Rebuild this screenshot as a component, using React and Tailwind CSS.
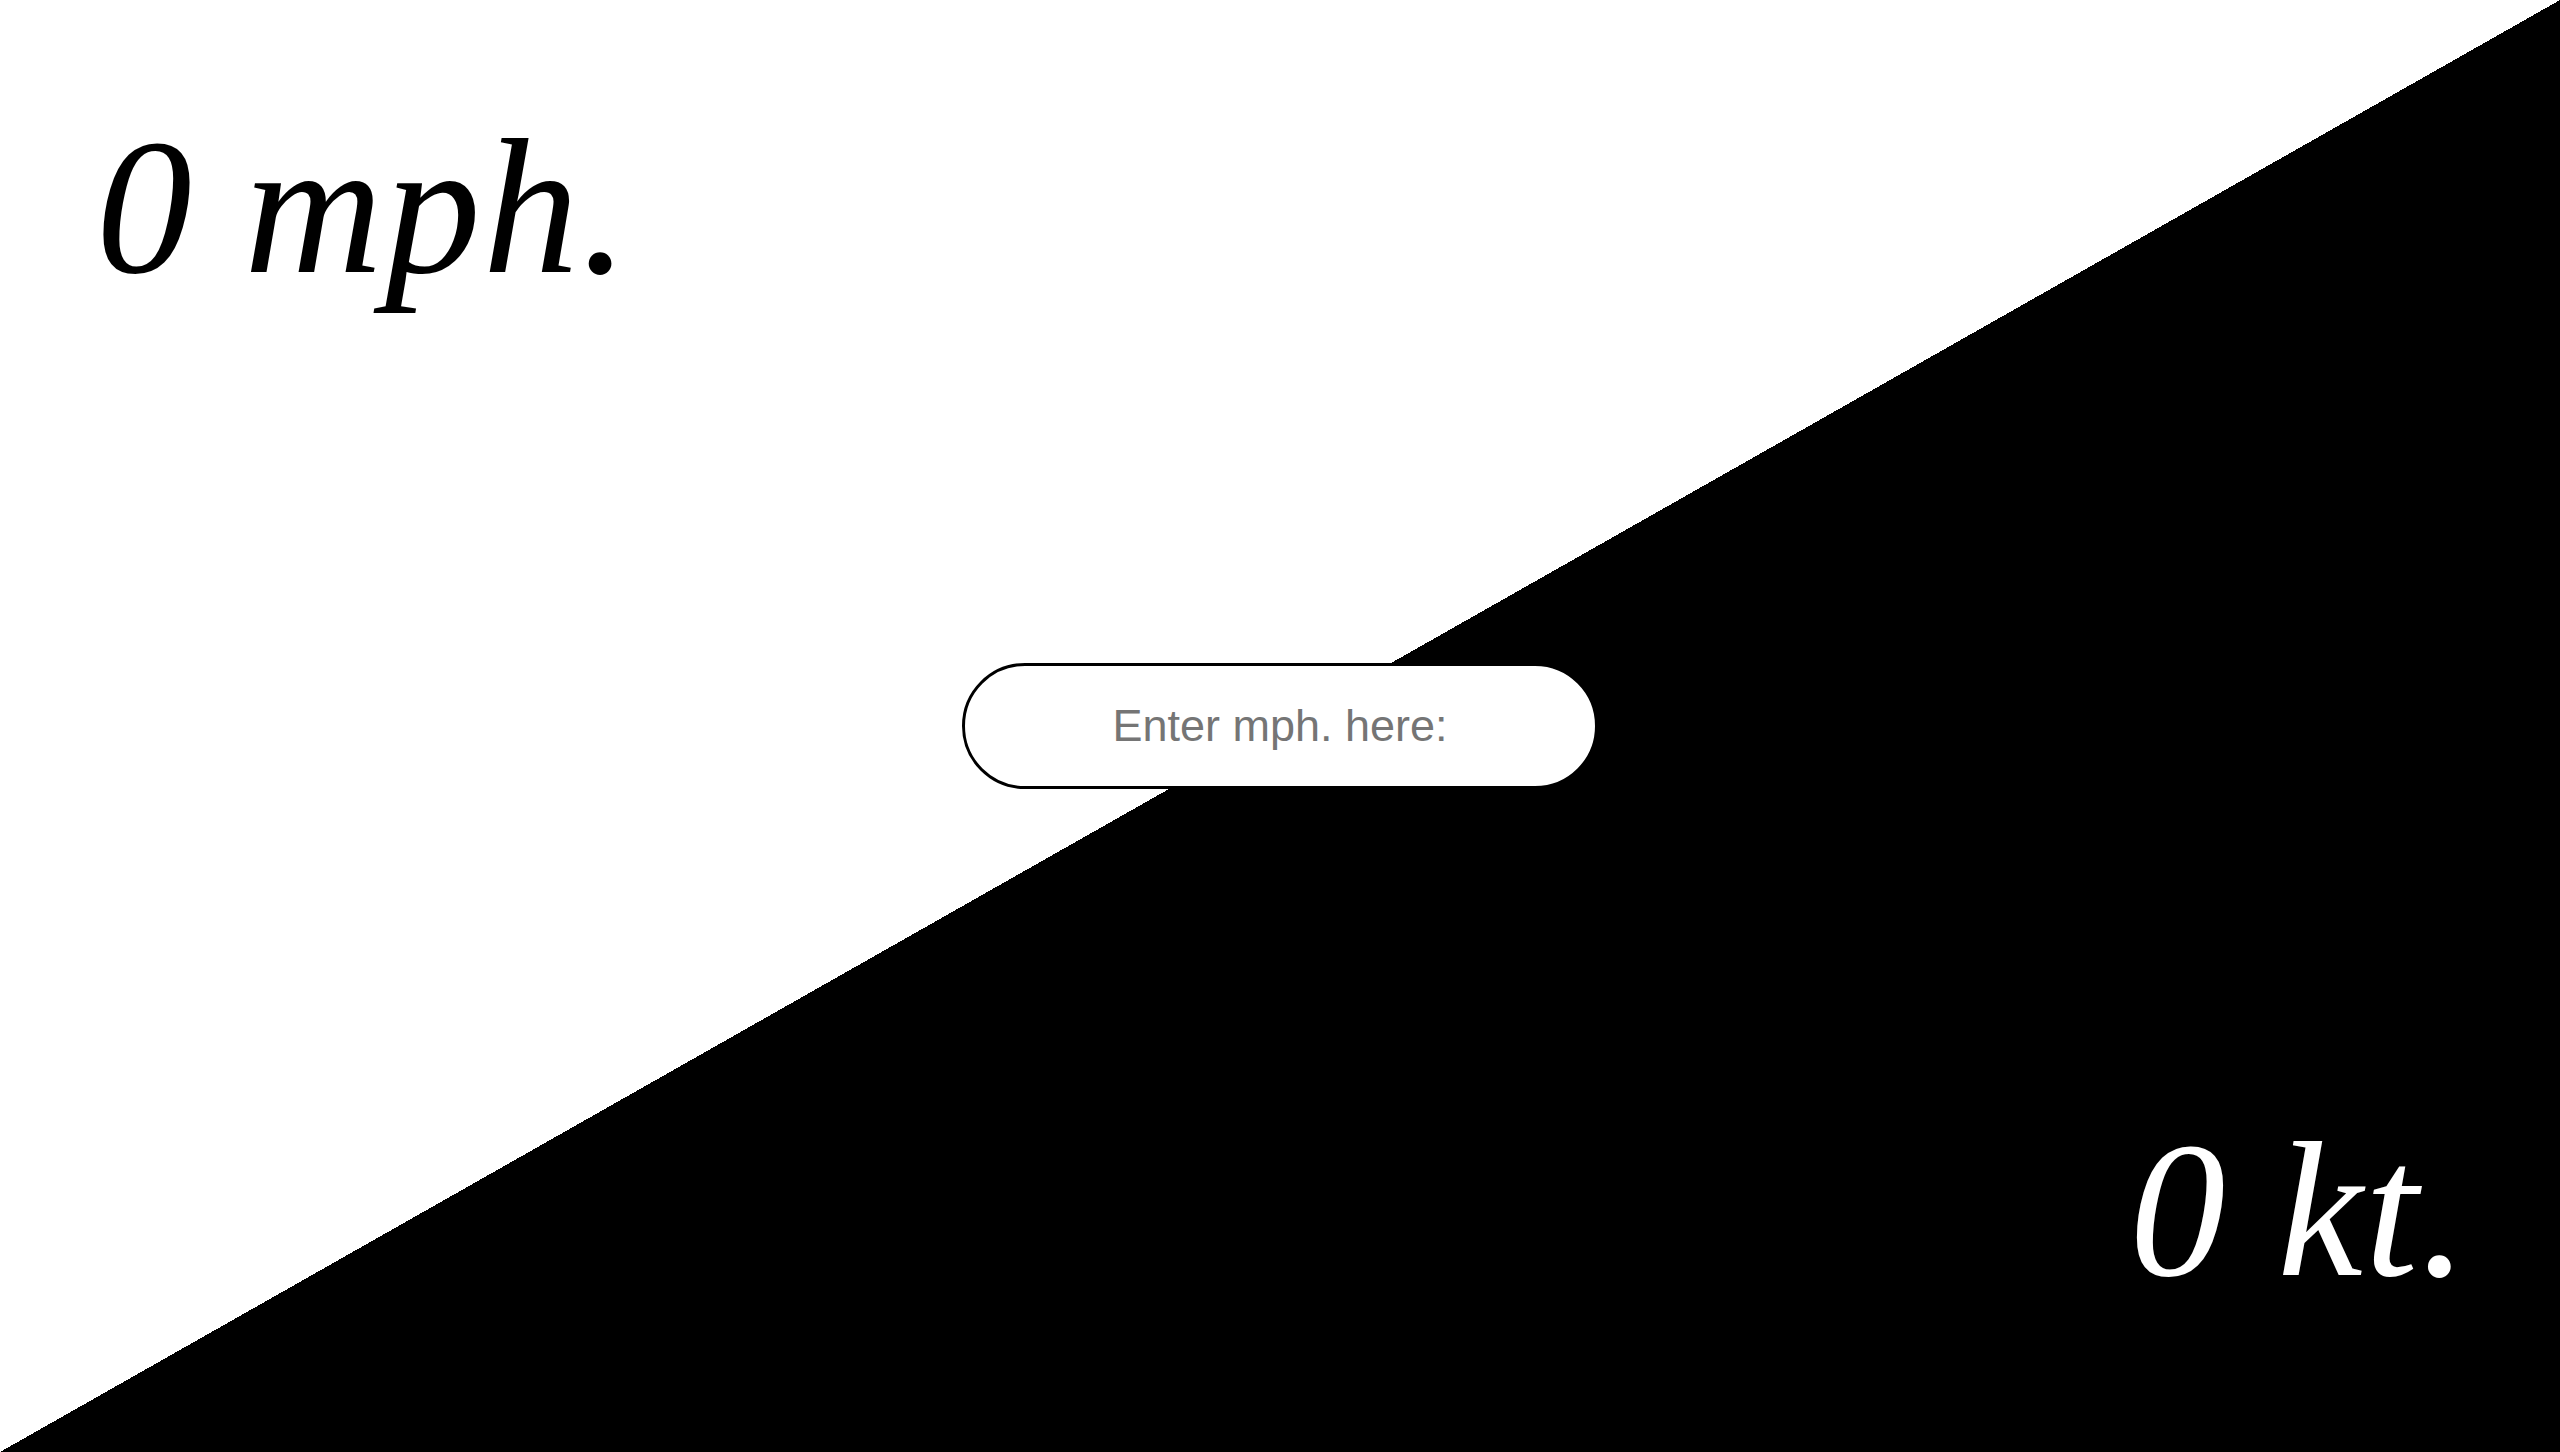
import React, { useState } from "react";

// mph -> knots converter, split diagonally

const App = () => {
  const [mph, setMph] = useState("");

  const value = parseFloat(mph);
  const speed = isNaN(value) ? 0 : value;
  const knots = Math.round(speed * 0.868976 * 100) / 100;

  return (
    <div className="grid h-[1452px] w-full grid-rows-[1fr_auto_1fr] overflow-hidden bg-[linear-gradient(to_top_left,#000_50%,#fff_50%)]">
      <div className="self-start pl-[96px] pt-[64px]">
        <p className="font-['Liberation_Serif',serif] text-[192px] italic leading-normal tracking-[2px] text-black">
          {speed} mph.
        </p>
      </div>

      <div className="flex items-center justify-center">
        <input
          type="text"
          value={mph}
          onChange={(e) => setMph(e.target.value)}
          placeholder="Enter mph. here:"
          className="h-[126px] w-[636px] rounded-full border-[3px] border-black bg-white text-center font-['Liberation_Sans',Arial,sans-serif] text-[45px] text-black outline-none placeholder:text-[#757575]"
        />
      </div>

      <div className="flex justify-end self-end pb-[97px] pr-[90px]">
        <p className="font-['Liberation_Serif',serif] text-[192px] italic leading-normal tracking-[2px] text-white">
          {knots} kt.
        </p>
      </div>
    </div>
  );
};

export default App;
